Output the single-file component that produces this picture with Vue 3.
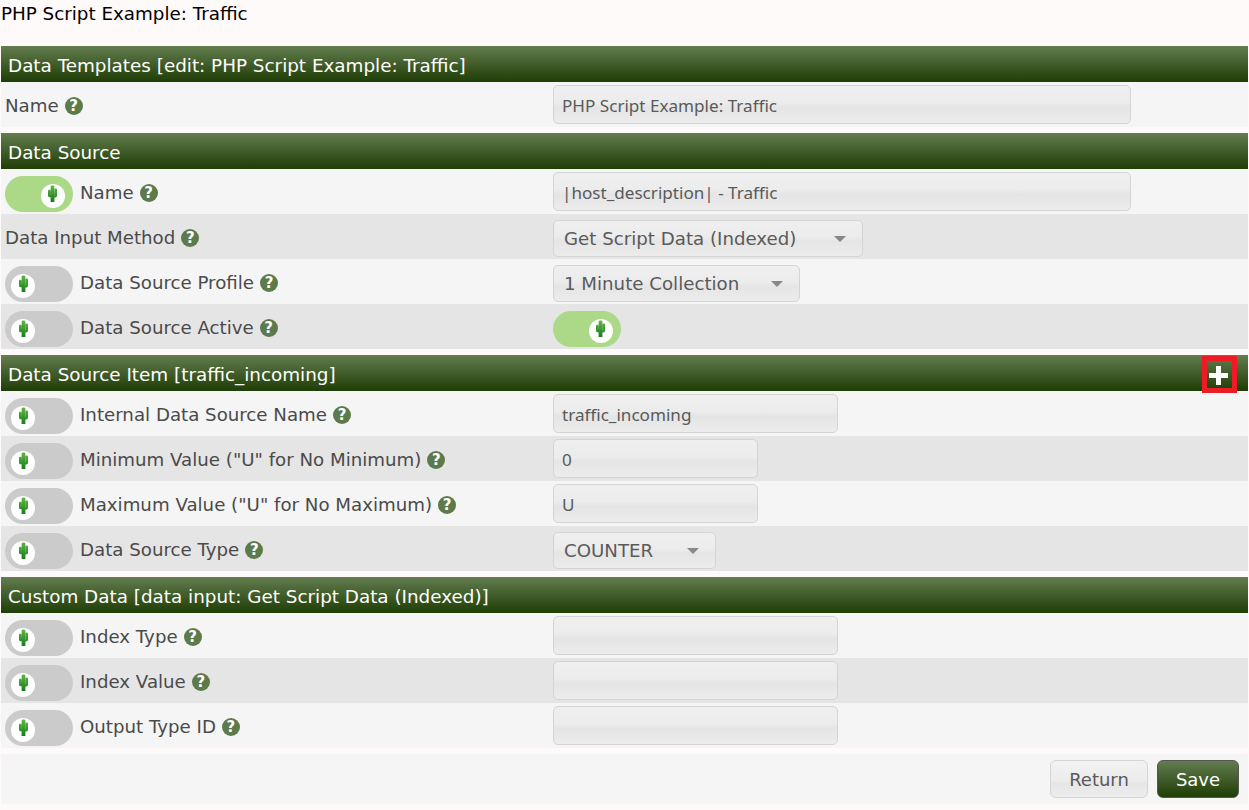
<script setup>
const sections = [
  { title: 'Data Templates [edit: PHP Script Example: Traffic]', rows: [
    { label: 'Name', kind: 'input', value: 'PHP Script Example: Traffic', w: 578 },
  ]},
  { title: 'Data Source', rows: [
    { label: 'Name', toggle: true, kind: 'input', value: '|host_description| - Traffic', w: 578 },
    { label: 'Data Input Method', kind: 'select', value: 'Get Script Data (Indexed)', w: 310 },
    { label: 'Data Source Profile', toggle: false, kind: 'select', value: '1 Minute Collection', w: 247 },
    { label: 'Data Source Active', toggle: false, kind: 'switch' },
  ]},
  { title: 'Data Source Item [traffic_incoming]', plus: true, rows: [
    { label: 'Internal Data Source Name', toggle: false, kind: 'input', value: 'traffic_incoming', w: 285 },
    { label: 'Minimum Value ("U" for No Minimum)', toggle: false, kind: 'input', value: '0', w: 205 },
    { label: 'Maximum Value ("U" for No Maximum)', toggle: false, kind: 'input', value: 'U', w: 205 },
    { label: 'Data Source Type', toggle: false, kind: 'select', value: 'COUNTER', w: 163 },
  ]},
  { title: 'Custom Data [data input: Get Script Data (Indexed)]', rows: [
    { label: 'Index Type', toggle: false, kind: 'input', value: '', w: 285 },
    { label: 'Index Value', toggle: false, kind: 'input', value: '', w: 285 },
    { label: 'Output Type ID', toggle: false, kind: 'input', value: '', w: 285 },
  ]},
]
const cactus = 'M2.6 17V1.8C2.6 .2 6.4 .2 6.4 1.8V17ZM3 12.2H1.8C.8 12.2 0 11.4 0 10.4V5.8C0 4.3 2.5 4.3 2.5 5.8V9.6H3ZM6 10.4H6.6V4.6C6.6 3.1 9 3.1 9 4.6V10.6C9 11.7 8.2 12.6 7.2 12.6H6Z'
</script>

<template>
  <div class="page">
    <svg width="0" height="0" class="defs">
      <defs>
        <linearGradient id="cactus-fill" x1="0" y1="0" x2="0" y2="1">
          <stop offset="0" stop-color="#62b544" />
          <stop offset="1" stop-color="#167d1f" />
        </linearGradient>
      </defs>
    </svg>
    <div class="title">PHP Script Example: Traffic</div>
    <section v-for="s in sections" :key="s.title" class="section">
      <div class="head">
        <span>{{ s.title }}</span>
        <span v-if="s.plus" class="plus"></span>
      </div>
      <div v-for="r in s.rows" :key="r.label" class="row">
        <div class="left">
          <span v-if="r.toggle !== undefined" class="tog" :class="{ on: r.toggle }">
            <span class="knob">
              <svg class="cactus" viewBox="0 0 9 17" width="9" height="17"><path :d="cactus" fill="url(#cactus-fill)" /></svg>
            </span>
          </span>
          <span class="label">{{ r.label }}</span>
          <span class="help">?</span>
        </div>
        <div class="right">
          <div v-if="r.kind === 'input'" class="field" :style="{ width: r.w + 'px' }">{{ r.value }}</div>
          <div v-else-if="r.kind === 'select'" class="field select" :style="{ width: r.w + 'px' }">
            <span>{{ r.value }}</span><i class="caret"></i>
          </div>
          <span v-else class="tog on">
            <span class="knob">
              <svg class="cactus" viewBox="0 0 9 17" width="9" height="17"><path :d="cactus" fill="url(#cactus-fill)" /></svg>
            </span>
          </span>
        </div>
      </div>
    </section>
    <div class="actions">
      <button class="btn ret">Return</button>
      <button class="btn save">Save</button>
    </div>
  </div>
</template>

<style>
html, body { background: #fffafa; }
</style>

<style scoped>
.defs { position: absolute; }
.page {
  width: 1247px;
  margin-left: 1px;
  height: 810px;
  font-family: "DejaVu Sans", sans-serif;
  font-size: 18.2px;
  color: #4a4a4a;
  overflow: hidden;
}
.title {
  height: 46px;
  padding-top: 4px;
  box-sizing: border-box;
  line-height: 20px;
  color: #000;
  font-size: 18.3px;
}
.section { margin-bottom: 6px; }
.head {
  height: 36px;
  box-sizing: border-box;
  padding: 2px 11px 0 7px;
  display: flex;
  align-items: center;
  justify-content: space-between;
  color: #fff;
  font-size: 18.35px;
  background: linear-gradient(#637d4f, #1f3d05);
}
.plus {
  width: 35px;
  height: 37px;
  box-sizing: border-box;
  border: 5px solid #ed1c24;
  position: relative;
  z-index: 1;
  align-self: flex-start;
  margin-top: -1px;
}
.plus::before, .plus::after {
  content: "";
  position: absolute;
  background: #fff;
}
.plus::before { left: 2px; width: 19px; top: 12px; height: 5px; }
.plus::after { top: 5px; height: 19px; left: 9px; width: 5px; }
.row {
  height: 45px;
  display: flex;
  align-items: center;
  background: #f5f5f5;
}
.row:nth-child(odd) { background: #e5e5e5; }
.left {
  width: 552px;
  display: flex;
  align-items: center;
  padding-left: 4px;
  box-sizing: border-box;
}
.label, .help { margin-top: 2px; }
.tog {
  width: 68px;
  height: 36px;
  border-radius: 18px;
  background: #cbcbcb;
  display: flex;
  align-items: center;
  padding: 0 6px;
  box-sizing: border-box;
  margin-right: 7px;
  margin-top: 5px;
  flex: none;
}
.right .tog { margin-right: 0; }
.tog.on { background: #acd988; justify-content: flex-end; padding-right: 8.5px; }
.knob {
  width: 24px;
  height: 24px;
  margin-top: 3px;
  border-radius: 50%;
  background: #fff;
  display: flex;
  align-items: center;
  justify-content: center;
}
.cactus { margin-bottom: 4px; }
.help {
  width: 18px;
  height: 18px;
  border-radius: 50%;
  background: #5d7a4b;
  color: #fff;
  font-size: 15px;
  font-weight: bold;
  line-height: 18px;
  text-align: center;
  margin-left: 6px;
}
.field {
  height: 39px;
  box-sizing: border-box;
  border: 1px solid #d4d4d4;
  border-radius: 5px;
  background: linear-gradient(#efefef 0%, #ececec 45%, #e5e5e5 58%, #ececec 100%);
  padding: 0 8px;
  line-height: 39px;
  color: #5a5a5a;
  font-family: "Noto Sans", sans-serif;
  font-size: 17.1px;
}
.select {
  height: 37px;
  margin-top: 4px;
  display: flex;
  align-items: center;
  justify-content: space-between;
  padding: 0 16px 0 10px;
  font-family: "DejaVu Sans", sans-serif;
  font-size: 18.2px;
}
.caret {
  width: 0;
  height: 0;
  border-left: 6px solid transparent;
  border-right: 6px solid transparent;
  border-top: 6px solid #888;
}
.actions {
  height: 50px;
  background: #f5f5f5;
  display: flex;
  align-items: center;
  justify-content: flex-end;
  gap: 9px;
  padding-right: 9px;
}
.btn {
  height: 38px;
  padding: 0;
  font: 18px "DejaVu Sans", sans-serif;
  color: #5a5a5a;
  border: 1px solid #d4d4d4;
  border-radius: 6px;
  background: linear-gradient(#f2f2f2 0%, #ececec 55%, #e6e6e6 62%, #ededed 100%);
}
.btn.ret { width: 98px; }
.btn.save {
  width: 82px;
  color: #fff;
  border-color: #555;
  background: linear-gradient(#637d4f, #1f3d05);
}
</style>
